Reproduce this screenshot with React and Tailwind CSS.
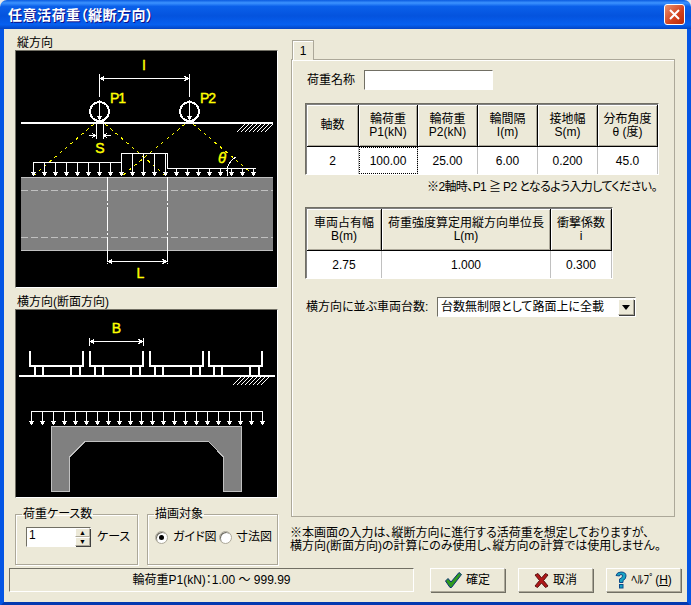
const axleCols = "grid-cols-[52px_59px_60px_60px_60px_60px]";
const sunken = "border border-t-[#716f64] border-l-[#716f64] border-r-white border-b-white";

function DownArrow({ x, y1, y2 }) {
  return (
    <g>
      <line x1={x} y1={y1} x2={x} y2={y2} stroke="#fff" />
      <polygon points={`${x - 3},${y2 - 4} ${x + 3},${y2 - 4} ${x},${y2}`} fill="#fff" />
    </g>
  );
}

function DimLine({ x1, x2, y }) {
  return (
    <g stroke="#fff" fill="none">
      <line x1={x1} y1={y} x2={x2} y2={y} />
      <polyline points={`${x1 + 5},${y - 2} ${x1 + 1},${y} ${x1 + 5},${y + 2}`} />
      <polyline points={`${x2 - 5},${y - 2} ${x2 - 1},${y} ${x2 - 5},${y + 2}`} />
    </g>
  );
}

function Hatch({ x, y }) {
  return (
    <g stroke="#fff">
      {[0, 4, 8, 12, 16, 20, 24, 28].map((d) => (
        <line key={d} x1={x + d} y1={y + 8} x2={x + d + 8} y2={y} />
      ))}
    </g>
  );
}

function LongitudinalDiagram() {
  const arrows = Array.from({ length: 21 }, (_, i) => 33 + i * 11);
  return (
    <svg viewBox="16 51 261 236" className="block w-[261px] h-[236px] bg-black" shapeRendering="crispEdges">
      <rect x="21" y="177" width="252" height="74" fill="#808080" />
      <line x1="21" y1="177.5" x2="273" y2="177.5" stroke="#c0c0c0" />
      <line x1="21" y1="250.5" x2="273" y2="250.5" stroke="#c0c0c0" />
      <line x1="21" y1="190.5" x2="273" y2="190.5" stroke="#c0c0c0" strokeDasharray="7 3" />
      <line x1="21" y1="237.5" x2="273" y2="237.5" stroke="#c0c0c0" strokeDasharray="7 3" />
      <line x1="107.5" y1="177" x2="107.5" y2="264" stroke="#fff" strokeDasharray="24 2 2 2" />
      <line x1="167.5" y1="177" x2="167.5" y2="264" stroke="#fff" strokeDasharray="24 2 2 2" />
      <DimLine x1={107.5} x2={167.5} y={261.5} />

      <DimLine x1={99.5} x2={189.5} y={78.5} />
      <line x1="99.5" y1="74" x2="99.5" y2="97" stroke="#fff" />
      <line x1="189.5" y1="74" x2="189.5" y2="97" stroke="#fff" />

      <line x1="21" y1="122.5" x2="273" y2="122.5" stroke="#fff" strokeWidth="2" />
      <Hatch x={237} y={124} />
      {[99.5, 189.5].map((x) => (
        <g key={x}>
          <circle cx={x} cy="111.5" r="9.5" stroke="#fff" strokeWidth="2" fill="none" />
          <DownArrow x={x} y1={100} y2={120} />
          <rect x={x - 4} y="120" width="8" height="3" fill="#fff" />
        </g>
      ))}
      <line x1="96" y1="123" x2="96" y2="139" stroke="#fff" />
      <line x1="103.5" y1="123" x2="103.5" y2="139" stroke="#fff" />
      <line x1="89" y1="135.5" x2="96" y2="135.5" stroke="#fff" />
      <polyline points="92,133 95,135.5 92,138" stroke="#fff" fill="none" />
      <line x1="104" y1="135.5" x2="111" y2="135.5" stroke="#fff" />
      <polyline points="107,133 104,135.5 107,138" stroke="#fff" fill="none" />

      <g stroke="#ffff00" strokeDasharray="3 4">
        <line x1="94" y1="124" x2="33" y2="176" />
        <line x1="105" y1="124" x2="166" y2="176" />
        <line x1="185" y1="124" x2="122" y2="176" />
        <line x1="193" y1="124" x2="255" y2="176" />
      </g>

      <polyline points="33,162.5 121,162.5 121,153.5 167.5,153.5 167.5,168.5 255.5,168.5" stroke="#fff" fill="none" />
      {arrows.map((x) => (
        <DownArrow key={x} x={x + 0.5} y1={x < 121 ? 162 : x < 167 ? 153 : 168} y2={176} />
      ))}
      <path d="M228 176 Q224 165 236 157" stroke="#fff" fill="none" />

      <g fill="#ffff00" stroke="#ffff00" strokeWidth="0.4" fontSize="14" className="[font-family:'Liberation_Sans',sans-serif]">
        <text x="144" y="70" textAnchor="middle">I</text>
        <text x="110" y="103" letterSpacing="-1">P1</text>
        <text x="200" y="103" letterSpacing="-1">P2</text>
        <text x="100" y="153" textAnchor="middle">S</text>
        <text x="140.5" y="278" textAnchor="middle">L</text>
        <text x="222" y="163" textAnchor="middle" fontStyle="italic" fontSize="15">θ</text>
      </g>
    </svg>
  );
}

function Truck({ x }) {
  return (
    <g stroke="#fff" strokeWidth="2" fill="none">
      <polyline points={`${x},351 ${x},366 ${x + 53},366 ${x + 53},351`} />
      {[5, 13, 41, 50].map((d) => (
        <line key={d} x1={x + d} y1="366" x2={x + d} y2="376" />
      ))}
    </g>
  );
}

function CrossSectionDiagram() {
  const arrows = Array.from({ length: 22 }, (_, i) => 31.5 + i * 11);
  return (
    <svg viewBox="16 310 261 187" className="block w-[261px] h-[187px] bg-black" shapeRendering="crispEdges">
      <DimLine x1={89.5} x2={143.5} y={341.5} />
      <line x1="89.5" y1="338" x2="89.5" y2="346" stroke="#fff" />
      <line x1="143.5" y1="338" x2="143.5" y2="346" stroke="#fff" />
      {[30, 90, 150, 209].map((x) => (
        <Truck key={x} x={x} />
      ))}
      <line x1="19" y1="376" x2="275" y2="376" stroke="#fff" strokeWidth="2" />
      <Hatch x={233} y={377} />
      <line x1="31" y1="411.5" x2="262" y2="411.5" stroke="#fff" />
      {arrows.map((x) => (
        <DownArrow key={x} x={x} y1={411} y2={425} />
      ))}
      <polygon
        points="51,426 241.5,426 241.5,491 223.5,491 223.5,457 208.5,441.5 85,441.5 69.5,457 69.5,491 51,491"
        fill="#808080"
        stroke="#c0c0c0"
      />
      <text x="116.5" y="333" textAnchor="middle" fill="#ffff00" stroke="#ffff00" strokeWidth="0.4" fontSize="14" className="[font-family:'Liberation_Sans',sans-serif]">
        B
      </text>
    </svg>
  );
}

function Raised({ className = "", children }) {
  return (
    <div className={`bg-[#ece9d8] border border-t-white border-l-white border-r-[#aca899] border-b-[#aca899] shadow-[1px_1px_0_#404040] ${className}`}>
      {children}
    </div>
  );
}

function GroupBox({ title, className = "", children }) {
  return (
    <fieldset className={`border border-[#aca899] shadow-[1px_1px_0_#fff,inset_1px_1px_0_#fff] ${className}`}>
      <legend className="ml-[6px] px-[1px] leading-[14px] whitespace-nowrap">{title}</legend>
      {children}
    </fieldset>
  );
}

function Radio({ checked }) {
  return (
    <span className="flex items-center justify-center w-[13px] h-[13px] shrink-0 rounded-full bg-white border border-[#aca899] shadow-[inset_1px_1px_0_#716f64]">
      {checked && <span className="w-[5px] h-[5px] rounded-full bg-black" />}
    </span>
  );
}

function DialogButton({ icon, label }) {
  return (
    <button className="flex items-center justify-center gap-[4px] w-[75px] h-[24px] bg-[#ece9d8] border border-t-white border-l-white border-r-[#aca899] border-b-[#aca899] shadow-[1px_1px_0_#716f64]">
      {icon}
      <span>{label}</span>
    </button>
  );
}

function HeaderCell({ children }) {
  return (
    <div className="flex flex-col items-center justify-center leading-[13px] text-center border-r border-b border-black bg-[#ece9d8] shadow-[inset_1px_1px_0_#fff,inset_-1px_-1px_0_#aca899]">
      {children}
    </div>
  );
}

function ValueCell({ focus, children }) {
  return (
    <div className={`flex items-center justify-center bg-white border-r border-[#c0c0c0] ${focus ? "outline-1 outline-dotted outline-black -outline-offset-1" : ""}`}>
      {children}
    </div>
  );
}

export default function App() {
  return (
    <div className="w-[691px] h-[605px] flex flex-col overflow-hidden bg-[#e8e8e8] text-[12px] leading-[14px] text-black [font-family:'Liberation_Sans','Noto_Sans_CJK_JP',sans-serif] [font-feature-settings:'palt']">
      <div className="h-[29px] shrink-0 flex items-center justify-between pl-[8px] pr-[6px] rounded-t-[7px] bg-[linear-gradient(180deg,#0a5be0_0%,#3c93ff_10%,#0a60ea_22%,#0453de_55%,#0660f0_85%,#0344c4_100%)]">
        <span className="text-white font-bold text-[14px] tracking-[0.5px] [text-shadow:1px_1px_0_#0f1089]">任意活荷重（縦断方向）</span>
        <span className="flex items-center justify-center w-[21px] h-[21px] rounded-[3px] border border-white bg-[linear-gradient(135deg,#e9926f,#d2401c_60%,#b8290a)]">
          <svg viewBox="0 0 13 13" className="w-[13px] h-[13px]">
            <path d="M2 2 L11 11 M11 2 L2 11" stroke="#fff" strokeWidth="2" />
          </svg>
        </span>
      </div>

      <div className="flex-1 flex flex-col bg-[#ece9d8] border-x-4 border-b-4 border-x-[#0455e4] border-b-[#0339b0]">
        <div className="flex flex-1">
          <div className="w-[274px] shrink-0 pl-[11px] pt-[7px] flex flex-col">
            <span className="pl-[2px] h-[14px]">縦方向</span>
            <div className={`${sunken} w-[263px]`}>
              <LongitudinalDiagram />
            </div>
            <span className="pl-[2px] h-[14px] mt-[7px]">横方向(断面方向)</span>
            <div className={`${sunken} w-[263px]`}>
              <CrossSectionDiagram />
            </div>
            <div className="flex gap-[9px] mt-[9px]">
              <GroupBox title="荷重ケース数" className="w-[123px] h-[58px]">
                <div className="flex items-center gap-[6px] pl-[10px] pt-[6px]">
                  <div className={`${sunken} w-[65px] h-[20px] bg-white flex justify-between`}>
                    <span className="pl-[2px]">1</span>
                    <div className="w-[15px] flex flex-col">
                      <Raised className="h-[9px] flex items-center justify-center text-[7px] leading-none">▲</Raised>
                      <Raised className="h-[9px] flex items-center justify-center text-[7px] leading-none">▼</Raised>
                    </div>
                  </div>
                  <span>ケース</span>
                </div>
              </GroupBox>
              <GroupBox title="描画対象" className="w-[131px] h-[58px]">
                <div className="flex items-center pl-[7px] pt-[9px] whitespace-nowrap">
                  <Radio checked />
                  <span className="ml-[5px] w-[46px]">ガイド図</span>
                  <Radio />
                  <span className="ml-[4px]">寸法図</span>
                </div>
              </GroupBox>
            </div>
          </div>

          <div className="flex-1 pl-[12px] pt-[11px] flex flex-col">
            <div className="ml-[2px] w-[22px] h-[20px] -mb-px z-10 flex items-center justify-center bg-[#ece9d8] border border-b-0 border-[#aca899] shadow-[inset_1px_1px_0_#fff]">
              1
            </div>
            <div className="ml-px w-[384px] h-[458px] border border-[#aca899] shadow-[inset_1px_1px_0_#fff] pl-[13px] pt-[10px]">
              <div className="flex items-center gap-[9px] pl-[2px]">
                <span>荷重名称</span>
                <div className={`${sunken} w-[129px] h-[20px] bg-white`} />
              </div>

              <div className={`${sunken} inline-block mt-[13px]`}>
                <div className={`grid ${axleCols} grid-rows-[42px_27px] border border-[#808080] border-r-0 border-b-0`}>
                  <HeaderCell>軸数</HeaderCell>
                  <HeaderCell>
                    <span>輪荷重</span>
                    <span>P1(kN)</span>
                  </HeaderCell>
                  <HeaderCell>
                    <span>輪荷重</span>
                    <span>P2(kN)</span>
                  </HeaderCell>
                  <HeaderCell>
                    <span>輪間隔</span>
                    <span>I(m)</span>
                  </HeaderCell>
                  <HeaderCell>
                    <span>接地幅</span>
                    <span>S(m)</span>
                  </HeaderCell>
                  <HeaderCell>
                    <span>分布角度</span>
                    <span>θ (度)</span>
                  </HeaderCell>
                  <ValueCell>2</ValueCell>
                  <ValueCell focus>100.00</ValueCell>
                  <ValueCell>25.00</ValueCell>
                  <ValueCell>6.00</ValueCell>
                  <ValueCell>0.200</ValueCell>
                  <ValueCell>45.0</ValueCell>
                </div>
              </div>
              <p className="pl-[122px] mt-[5px] whitespace-nowrap tracking-[-0.6px]">※2軸時、P1 ≧ P2 となるよう入力してください。</p>

              <div className={`${sunken} inline-block mt-[13px]`}>
                <div className="grid grid-cols-[75px_169px_61px] grid-rows-[42px_27px] border border-[#808080] border-r-0 border-b-0">
                  <HeaderCell>
                    <span>車両占有幅</span>
                    <span>B(m)</span>
                  </HeaderCell>
                  <HeaderCell>
                    <span>荷重強度算定用縦方向単位長</span>
                    <span>L(m)</span>
                  </HeaderCell>
                  <HeaderCell>
                    <span>衝撃係数</span>
                    <span>i</span>
                  </HeaderCell>
                  <ValueCell>2.75</ValueCell>
                  <ValueCell>1.000</ValueCell>
                  <ValueCell>0.300</ValueCell>
                </div>
              </div>

              <div className="flex items-center mt-[18px]">
                <span className="pl-px w-[132px] whitespace-nowrap">横方向に並ぶ車両台数:</span>
                <div className={`${sunken} w-[199px] h-[20px] bg-white flex items-center justify-between pl-[3px] pr-px`}>
                  <span>台数無制限として路面上に全載</span>
                  <Raised className="w-[16px] h-[16px] flex items-center justify-center">
                    <svg viewBox="0 0 8 5" className="w-[8px] h-[5px]">
                      <path d="M0 0 H8 L4 5 Z" fill="#000" />
                    </svg>
                  </Raised>
                </div>
              </div>
            </div>
            <p className="mt-[10px] leading-[13px] whitespace-nowrap">
              ※本画面の入力は、縦断方向に進行する活荷重を想定しておりますが、
              <br />
              横方向(断面方向)の計算にのみ使用し、縦方向の計算では使用しません。
            </p>
          </div>
        </div>

        <div className="flex items-center h-[30px] mb-[7px] pl-[5px]">
          <div className={`${sunken} w-[405px] h-[24px] flex items-center justify-center`}>
            輪荷重P1(kN)：1.00 ～ 999.99
          </div>
          <div className="flex gap-[13px] ml-[16px]">
            <DialogButton
              label="確定"
              icon={
                <svg viewBox="0 0 17 16" className="w-[17px] h-[16px]">
                  <path d="M0.5 9 L3 6.5 L6 10 L14 0.5 L16.5 2.5 L6.5 15.5 L5 15.5 Z" fill="#2f9a1f" stroke="#0b2f7a" />
                </svg>
              }
            />
            <DialogButton
              label="取消"
              icon={
                <svg viewBox="0 0 15 15" className="w-[15px] h-[15px]">
                  <path d="M1 2 L4 0.5 L7.5 5 L11.5 0.5 L14 2 L9.5 7.5 L14 13 L11.5 14.5 L7.5 10 L3.5 14.5 L1 13 L5.5 7.5 Z" fill="#b01818" stroke="#5a1010" />
                </svg>
              }
            />
            <DialogButton
              label={
                <>
                  ﾍﾙﾌﾟ(<u>H</u>)
                </>
              }
              icon={
                <svg viewBox="0 0 12 18" className="w-[12px] h-[18px]">
                  <path d="M1 4.5 Q2 1 6 1 Q11 1 11 5 Q11 8 8 9.5 L8 11.5 L4.5 11.5 L4.5 8 Q7.5 7 7.5 5 Q7.5 3.5 6 3.5 Q4.5 3.5 4.5 5 Z" fill="#19a5c4" stroke="#0d4a8a" />
                  <rect x="4.5" y="13.5" width="3.5" height="3.5" fill="#19a5c4" stroke="#0d4a8a" />
                </svg>
              }
            />
          </div>
        </div>
      </div>
    </div>
  );
}
